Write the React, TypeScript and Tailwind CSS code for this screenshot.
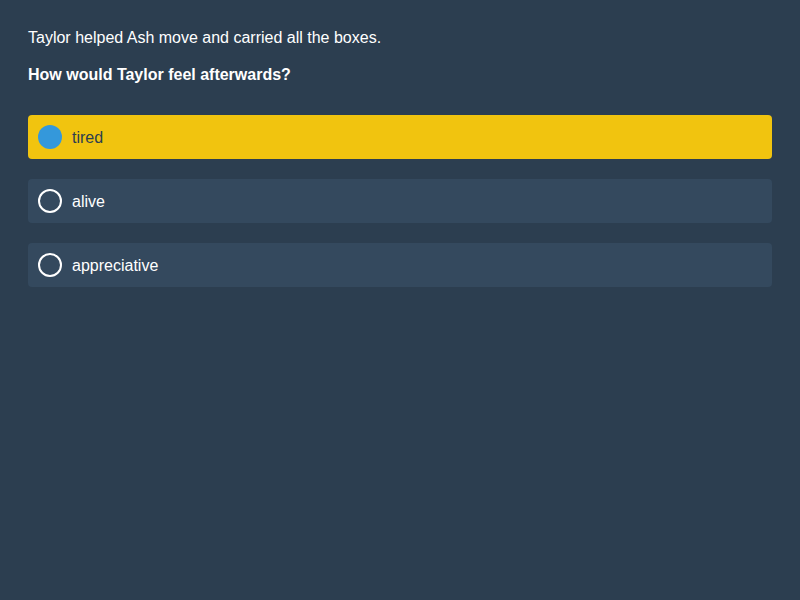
import React from "react";

const options = [
  { label: "tired", selected: true },
  { label: "alive", selected: false },
  { label: "appreciative", selected: false },
];

export default function App() {
  return (
    <div
      className="w-[800px] h-[600px] bg-[#2c3e50] p-[28px] text-white"
      style={{ fontFamily: '"Liberation Sans", Arial, sans-serif' }}
    >
      <p className="text-[16px] leading-5">Taylor helped Ash move and carried all the boxes.</p>
      <p className="text-[16px] leading-5 font-bold mt-[17px]">How would Taylor feel afterwards?</p>
      <div className="mt-[30px] flex flex-col gap-[20px]">
        {options.map((o) => (
          <div
            key={o.label}
            className={
              o.selected
                ? "h-[44px] rounded-[4px] bg-[#f1c40f] flex items-center px-[10px] text-[#2c3e50]"
                : "h-[44px] rounded-[4px] bg-[#34495e] flex items-center px-[10px] text-white"
            }
          >
            <span
              className={
                o.selected
                  ? "w-[24px] h-[24px] rounded-full bg-[#3498db] shrink-0"
                  : "w-[24px] h-[24px] rounded-full border-2 border-white shrink-0"
              }
            />
            <span className="ml-[10px] text-[16px] leading-5 mt-[2px]">{o.label}</span>
          </div>
        ))}
      </div>
    </div>
  );
}
